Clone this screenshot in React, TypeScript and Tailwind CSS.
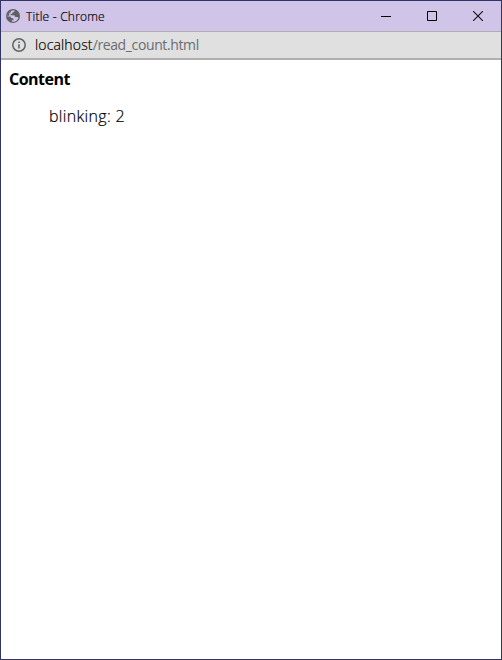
import React from "react";

function GlobeIcon() {
  return (
    <svg className="h-[14px] w-[14px] shrink-0" viewBox="0 0 14 14">
      <circle cx="7" cy="7" r="7" fill="#5f6067" />
      <path
        d="M8.6 1.6 C8.6 3 7.8 3.3 6.6 3.3 C6.6 4.8 5.4 4.9 4.6 5.1 V6.2 H7.6 C8.8 6.2 9 7 9 8 H11 C11.8 8 12.2 8.3 12.4 8.8 A5.7 5.7 0 0 1 5.8 12.5 V11.2 H7.2 C7.6 10.6 7.6 9.8 7.2 9.3 H5.6 C4.8 9.3 4.8 8.2 4.6 7.6 H1.5 A5.7 5.7 0 0 1 8.6 1.6 Z"
        fill="#d1c4e9"
      />
      <path d="M1.3 6.8 A5.8 5.8 0 0 1 5.2 1.6 L4.7 3.3 L3.2 4.3 V6.8 Z" fill="#5f6067" />
    </svg>
  );
}

function InfoIcon() {
  return (
    <svg className="h-[14px] w-[14px] shrink-0" viewBox="0 0 14 14" fill="none">
      <circle cx="7" cy="7" r="6.2" stroke="#5f6368" strokeWidth="1.5" />
      <path d="M7 6.3V10.5M7 3.5V5" stroke="#5f6368" strokeWidth="1.6" />
    </svg>
  );
}

function WindowControls() {
  return (
    <div className="ml-auto flex h-full items-center text-black">
      <div className="flex w-[46px] justify-center">
        <svg className="h-[10px] w-[10px]" viewBox="0 0 10 10" shapeRendering="crispEdges">
          <path d="M0 5h10v1H0z" fill="#000" />
        </svg>
      </div>
      <div className="flex w-[46px] justify-center">
        <svg className="h-[10px] w-[10px]" viewBox="0 0 10 10" fill="none" stroke="#000">
          <path d="M.5 .5h9v9h-9z" />
        </svg>
      </div>
      <div className="flex w-[46px] justify-center">
        <svg className="h-[10px] w-[10px]" viewBox="0 0 10 10" fill="none" stroke="#111">
          <path d="M0 0L10 10M10 0L0 10" strokeWidth="1.1" />
        </svg>
      </div>
    </div>
  );
}

export default function App() {
  return (
    <div className="flex h-[660px] w-[502px] flex-col border border-[#303468] bg-white font-['Open_Sans','Noto_Sans',sans-serif] text-black">
      <header className="flex h-[30px] shrink-0 items-center bg-[#d1c4e9] pb-px pl-[5px]">
        <GlobeIcon />
        <span className="ml-[6px] mt-[3px] whitespace-nowrap text-[12px] font-light leading-4 tracking-[0.22px] text-black [-webkit-text-stroke:0.2px]">
          Title - Chrome
        </span>
        <WindowControls />
      </header>
      <div className="flex h-[29px] shrink-0 items-center border-t border-b-2 border-t-[#b0aeb5] border-b-[#b0b0b0] bg-[#e0e0e0] pl-[11px]">
        <InfoIcon />
        <span className="ml-[9px] whitespace-nowrap text-[14px] leading-5 tracking-[-0.38px] text-[#6a6d72]">
          <span className="font-light tracking-[0.15px] text-black [-webkit-text-stroke:0.2px]">localhost</span>
          /read_count.html
        </span>
      </div>
      <main className="px-2 pt-2">
        <h1 className="text-[16px] font-bold leading-[22px] tracking-[-0.5px]">Content</h1>
        <p className="ml-10 mt-[15px] text-[16px] font-light leading-[22px] tracking-[0.32px] [-webkit-text-stroke:0.2px]">
          blinking: 2
        </p>
      </main>
    </div>
  );
}
